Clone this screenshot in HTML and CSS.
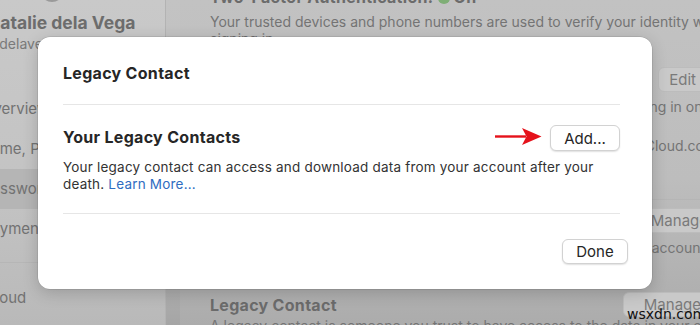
FILE: index.html
```html
<!DOCTYPE html>
<html lang="en">
<head>
    <meta charset="UTF-8">
    <title>Legacy Contact</title>
    <link rel="stylesheet" href="styles.css">
</head>
<body>
    <div class="window">
        <aside class="sidebar">
            <div class="account">
                <div class="avatar"></div>
                <div class="account-name">Natalie dela Vega</div>
                <div class="account-mail">ndelavega@icloud.com</div>
            </div>
            <ul class="nav">
                <li class="nav-overview">Overview</li>
                <li class="nav-name">Name, Phone, Email</li>
                <li class="nav-password active">Password &amp; Security</li>
                <li class="nav-payment">Payment &amp; Shipping</li>
                <li class="nav-icloud">iCloud</li>
            </ul>
        </aside>
        <div class="split"></div>
        <main class="pane">
            <h3 class="pane-title">Two-Factor Authentication: <span class="dot"></span> On</h3>
            <p class="pane-text intro">Your trusted devices and phone numbers are used to verify your identity when<br>signing in.</p>

            <div class="pane-row row-edit">
                <h3 class="pane-title">Trusted Phone Numbers</h3>
                <button class="pane-btn">Edit</button>
            </div>
            <p class="pane-text line-a">Trusted phone numbers are used to verify your identity when signing in on</p>
            <p class="pane-text line-b">Apps that use Sign in with Apple can securely sync the data with iCloud.com</p>

            <div class="pane-row row-manage">
                <h3 class="pane-title">Account Recovery</h3>
                <button class="pane-btn">Manage</button>
            </div>
            <p class="pane-text line-c">If you forget your password, you can use recovery to recover your account</p>

            <div class="pane-row row-legacy">
                <h3 class="pane-title">Legacy Contact</h3>
                <button class="pane-btn wide">Manage</button>
            </div>
            <p class="pane-text line-d">A legacy contact is someone you trust to have access to the data in your account</p>
        </main>
    </div>

    <div class="sheet">
        <h2 class="sheet-title">Legacy Contact</h2>
        <div class="sheet-section">
            <div class="section-head">
                <h3>Your Legacy Contacts</h3>
                <div class="add-wrap">
                    <svg class="arrow" width="47" height="17" viewBox="0 0 47 17">
                        <path d="M0 7.3 L31 7.3 L31 9.7 L0 9.7 Z" fill="#e5121b"/>
                        <path d="M27 0 L46.5 8.5 L27 17 L31.5 8.5 Z" fill="#e5121b"/>
                    </svg>
                    <button class="btn">Add...</button>
                </div>
            </div>
            <p class="section-text">Your legacy contact can access and download data from your account after your death. <a href="#">Learn More...</a></p>
        </div>
        <div class="sheet-foot">
            <button class="btn btn-done">Done</button>
        </div>
    </div>

    <div class="watermark">wsxdn.com</div>
</body>
</html>
```

FILE: styles.css
```css
body, html {
    margin: 0;
    padding: 0;
    box-sizing: border-box;
    font-family: 'Inter', 'Liberation Sans', sans-serif;
}

body {
    width: 700px;
    height: 325px;
    overflow: hidden;
    position: relative;
    background: #bababa;
}

.window {
    display: flex;
    height: 325px;
}

/* left sidebar, dimmed */
.sidebar {
    width: 165px;
    flex-shrink: 0;
    background: linear-gradient(180deg, #c9c9c9 0%, #c3c3c3 60%, #b9b9b9 100%);
    overflow: hidden;
    white-space: nowrap;
}

.avatar {
    width: 24px;
    height: 24px;
    border-radius: 50%;
    background: #9a9a9a;
    margin: -22px 0 0 40px;
}

.account-name {
    font-size: 17.5px;
    font-weight: 700;
    color: #6d6d6d;
    line-height: 22px;
    margin: 10px 0 0 -13px;
}

.account-mail {
    font-size: 14px;
    color: #7a7a7a;
    line-height: 18px;
    margin: 1px 0 0 -9px;
}

.nav {
    list-style: none;
    margin: 36px 0 0;
    padding: 0;
}

.nav li {
    height: 40px;
    line-height: 40px;
    font-size: 15px;
    color: #727272;
}

.nav .nav-overview { margin-left: -18px; }
.nav .nav-name { margin-left: -20px; }
.nav .nav-password { margin-left: -18px; }
.nav .nav-payment { margin-left: -18px; }

.nav li.active {
    background: #b5b5b5;
    padding-left: 18px;
    margin-left: -36px;
}

.nav .nav-icloud {
    margin: 13px 0 0 -19px;
    padding-top: 15px;
    border-top: 1px solid #b6b6b6;
}

.split {
    width: 14px;
    flex-shrink: 0;
    background: linear-gradient(180deg, #c3c3c3 0%, #bcbcbc 70%, #a5a5a5 100%);
    border-left: 1px solid #b3b3b3;
}

/* right pane, dimmed */
.pane {
    flex: 1;
    padding-left: 30px;
    background: linear-gradient(180deg, #c2c2c2 0%, #bdbdbd 55%, #acacac 100%);
    white-space: nowrap;
    overflow: hidden;
}

.pane-title {
    font-size: 16px;
    font-weight: 700;
    letter-spacing: 0.3px;
    color: #6b6b6b;
    margin: 0;
    line-height: 20px;
}

.pane > .pane-title:first-child {
    margin-top: -13px;
}

.dot {
    display: inline-block;
    width: 12px;
    height: 12px;
    border-radius: 50%;
    background: #7fae76;
    vertical-align: -1px;
}

.pane-text {
    font-size: 14px;
    color: #747474;
    line-height: 17px;
    margin: 0;
}

.pane-row {
    display: flex;
    justify-content: space-between;
    align-items: center;
}

.pane-btn {
    font-family: inherit;
    font-size: 15px;
    color: #7a7a7a;
    background: #c9c9c9;
    border: 1px solid #bcbcbc;
    border-radius: 6px;
    height: 25px;
    padding: 0 10px;
}

.pane-btn.wide {
    padding: 0 20px;
}

.intro {
    margin-top: 6px;
}

.row-edit {
    margin-top: 20px;
    width: 497px;
}

.line-a {
    margin-top: 6px;
}

.line-b {
    margin-top: 22px;
}

.row-manage {
    margin-top: 45px;
    width: 509px;
    border-top: 1px solid #b5b5b5;
    padding-top: 8px;
}

.line-c {
    margin-top: 6px;
}

.row-legacy {
    margin-top: 36px;
    width: 512px;
}

.line-d {
    margin-top: 0;
}

/* sheet dialog over the dimmed window */
.sheet {
    position: absolute;
    left: 38px;
    top: 37px;
    width: 614px;
    height: 252px;
    box-sizing: border-box;
    background: #fff;
    border-radius: 12px;
    box-shadow: 0 0 0 0.5px rgba(0, 0, 0, 0.15), 0 4px 16px rgba(0, 0, 0, 0.18);
    padding: 26px 32px 25px 25px;
    display: flex;
    flex-direction: column;
}

.sheet-title {
    font-size: 16px;
    font-weight: 700;
    letter-spacing: 0.3px;
    color: #262626;
    margin: 0;
    line-height: 20px;
    padding-bottom: 21px;
    border-bottom: 1px solid #e6e6e6;
}

.sheet-section {
    padding: 20px 0 20px;
    border-bottom: 1px solid #e6e6e6;
}

.section-head {
    display: flex;
    justify-content: space-between;
    align-items: center;
}

.section-head h3 {
    font-size: 16px;
    font-weight: 700;
    letter-spacing: 0.3px;
    color: #262626;
    margin: -3px 0 0;
}

.add-wrap {
    display: flex;
    align-items: center;
    gap: 8px;
}

.arrow {
    margin-top: -3px;
}

.btn {
    font-family: inherit;
    font-size: 15px;
    color: #262626;
    background: #fff;
    border: 0.5px solid #d2d2d2;
    border-radius: 6px;
    box-shadow: 0 1px 1.5px rgba(0, 0, 0, 0.12);
    height: 26px;
    width: 70px;
    padding: 0;
}

.section-text {
    font-size: 13.5px;
    letter-spacing: 0.2px;
    color: #333;
    line-height: 17px;
    margin: 8px 0 0;
}

.section-text a {
    color: #2f6dc1;
    text-decoration: none;
}

.sheet-foot {
    display: flex;
    justify-content: flex-end;
    margin-top: 25px;
    margin-right: -8px;
}

.btn-done {
    width: 66px;
    height: 25px;
}

.watermark {
    position: absolute;
    left: 627px;
    top: 306px;
    font-size: 14px;
    color: #111;
    font-family: 'DejaVu Sans', sans-serif;
}
```
